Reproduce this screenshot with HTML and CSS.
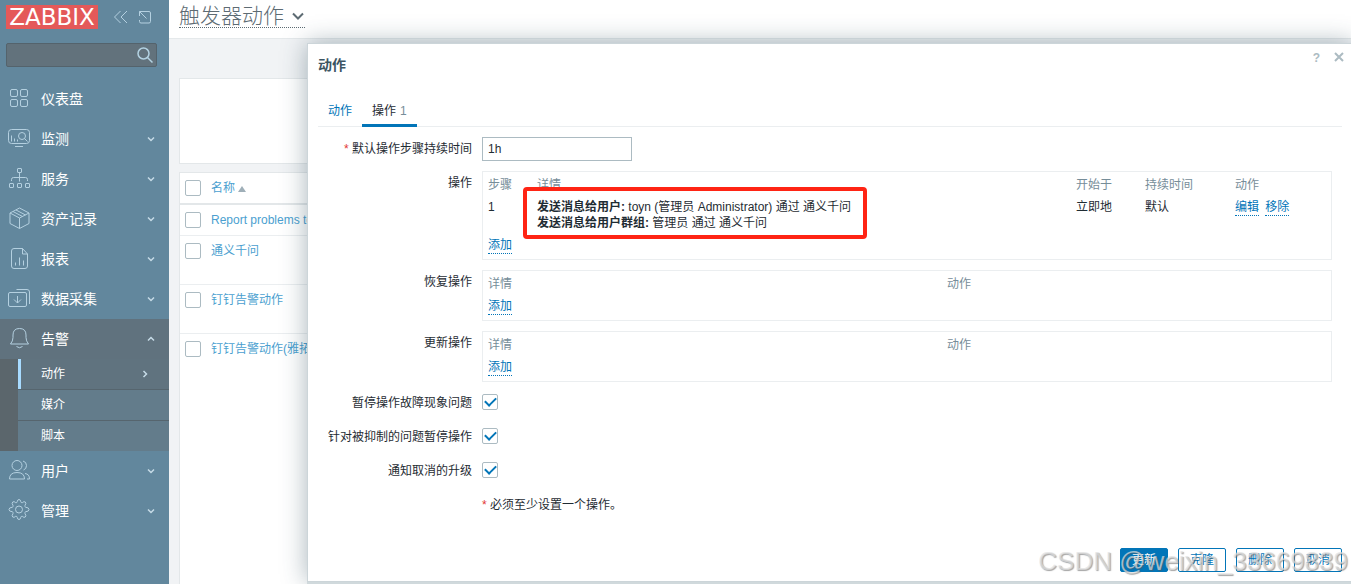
FILE: index.html
```html
<!DOCTYPE html>
<html lang="zh-CN">
<head>
<meta charset="utf-8">
<title>触发器动作</title>
<link rel="stylesheet" href="styles.css">
</head>
<body>
<aside class="sidebar">
  <div class="brand">
    <a class="logo" href="#">ZABBIX</a>
    <button class="icon-btn" aria-label="收起侧边栏"><svg width="16" height="16" viewBox="0 0 16 16"><path d="M7.500 2 1.500 8l6 6M14 2 8 8l6 6"/></svg></button>
    <button class="icon-btn" aria-label="隐藏侧边栏"><svg width="16" height="16" viewBox="0 0 16 16"><path d="M6 2.500h6q1.500 0 1.500 1.500v8.500q0 1.500-1.500 1.500H4q-1.500 0-1.500-1.500V11M9.500 9.500l-7-7M2.500 7V2.500H6"/></svg></button>
  </div>
  <form class="search">
    <input type="text" aria-label="搜索">
    <button type="button" aria-label="搜索"><svg width="18" height="18" viewBox="0 0 18 18"><circle cx="7.500" cy="7.500" r="5.500"/><path d="m11.500 11.500 5 5"/></svg></button>
  </form>
  <nav>
    <a class="item" href="#"><svg class="ico" viewBox="0 0 24 24"><rect x="2.500" y="3.500" width="7" height="7" rx="1.500"/><rect x="12.500" y="3.500" width="7" height="7" rx="1.500"/><rect x="2.500" y="13.500" width="7" height="7" rx="1.500"/><rect x="12.500" y="13.500" width="7" height="7" rx="1.500"/></svg><span>仪表盘</span></a>
    <a class="item" href="#"><svg class="ico" viewBox="0 0 24 24"><rect x=".5" y="3.500" width="21" height="14" rx="3"/><path d="M7 20.500h8M3.500 15.500v-6M6.500 15.500v-3M9.500 15.500v-2M16.500 12.500l3 3"/><circle cx="14" cy="10" r="3.500"/></svg><span>监测</span><svg class="chev" viewBox="0 0 8 8"><path d="m1 2.500 3 3 3-3"/></svg></a>
    <a class="item" href="#"><svg class="ico" viewBox="0 0 24 24"><rect x="9.500" y="2.500" width="4" height="4" rx=".5"/><rect x="1.500" y="17.500" width="4" height="4" rx=".5"/><rect x="9.500" y="17.500" width="4" height="4" rx=".5"/><rect x="17.500" y="17.500" width="4" height="4" rx=".5"/><path d="M11.500 6.500v8M11.500 12.500v3M3.500 15v-1.500q0-2 2-2h12q2 0 2 2V15"/></svg><span>服务</span><svg class="chev" viewBox="0 0 8 8"><path d="m1 2.500 3 3 3-3"/></svg></a>
    <a class="item" href="#"><svg class="ico" viewBox="0 0 24 24"><path d="m11.500 2 9.500 5v10.500l-9.500 5-9.500-5V7zM2 7l9.500 5L21 7M11.500 12v10.500M5 5.500l9.500 5M8 4l9.500 5"/></svg><span>资产记录</span><svg class="chev" viewBox="0 0 8 8"><path d="m1 2.500 3 3 3-3"/></svg></a>
    <a class="item" href="#"><svg class="ico" viewBox="0 0 24 24"><path d="M6 2.500h8.500l5 5.500v12q0 2.500-2.500 2.500H6q-2.500 0-2.500-2.500V5Q3.500 2.500 6 2.500zM14.500 2.500V8h5M7.500 19.500v-3M11.500 19.500v-8M15.500 19.500v-5"/></svg><span>报表</span><svg class="chev" viewBox="0 0 8 8"><path d="m1 2.500 3 3 3-3"/></svg></a>
    <a class="item" href="#"><svg class="ico" viewBox="0 0 24 24"><rect x=".5" y="6.500" width="18" height="14" rx="1.500"/><path d="M8.500 3.500H19q2.500 0 2.500 2.500v12M9.500 10v7M6 13.500 9.500 17l3.500-3.500"/></svg><span>数据采集</span><svg class="chev" viewBox="0 0 8 8"><path d="m1 2.500 3 3 3-3"/></svg></a>
    <div class="group">
      <a class="item open" href="#"><svg class="ico" viewBox="0 0 24 24"><path d="M2.500 18Q5 15 5 11.500V9Q5 2.500 11.500 2.500T18 9v2.500q0 3.500 2.500 6.500zM8.500 20.500q3 2.500 6 0"/></svg><span>告警</span><svg class="chev" viewBox="0 0 8 8"><path d="m1 5.500 3-3 3 3"/></svg></a>
      <div class="submenu">
        <a class="sub active" href="#"><span>动作</span><svg class="chev" viewBox="0 0 8 8"><path d="m2.500 1 3 3-3 3"/></svg></a>
        <a class="sub" href="#">媒介</a>
        <a class="sub" href="#">脚本</a>
      </div>
    </div>
    <a class="item" href="#"><svg class="ico" viewBox="0 0 24 24"><circle cx="9" cy="7.500" r="5"/><path d="M1.500 21q0-6.500 7.500-6.500t7.500 6.500zM15 3q3.500 1 3.500 4.500T15.500 12M17 15.500q4.500.5 4.500 5.500h-2.500"/></svg><span>用户</span><svg class="chev" viewBox="0 0 8 8"><path d="m1 2.500 3 3 3-3"/></svg></a>
    <a class="item" href="#"><svg class="ico" viewBox="0 0 24 24"><circle cx="11" cy="11.500" r="3.500"/><path d="M9.300 3.500Q9.500 1.500 11 1.500t1.700 2q.3 1.500 1.600 1.200 1.700-1.700 3-.7t-.3 3.500q-.7 1.200.8 1.800 3.200.2 3.200 2.200t-3.200 2.200q-1.500.6-.8 1.800 1.600 2.400.3 3.500t-3-.7q-1.300-.3-1.600 1.200-.2 2-1.700 2t-1.700-2Q9 18 7.700 18.300q-1.700 1.700-3 .7T5 15.500q.7-1.200-.8-1.800Q1 13.500 1 11.500t3.200-2.200Q5.700 8.700 5 7.500 3.400 5.100 4.700 4t3 .7Q9 5 9.300 3.500z"/></svg><span>管理</span><svg class="chev" viewBox="0 0 8 8"><path d="m1 2.500 3 3 3-3"/></svg></a>
  </nav>
</aside>

<main class="page">
  <header class="page-head">
    <h1><a class="title" href="#">触发器动作<svg width="12" height="8" viewBox="0 0 12 8"><path d="m1 1.500 5 5 5-5"/></svg></a></h1>
  </header>
  <div class="content">
    <section class="filter"></section>
    <table class="list">
      <thead><tr><th class="tick"><input type="checkbox" aria-label="全选"></th><th><a href="#">名称</a><i class="sort"></i></th></tr></thead>
      <tbody>
        <tr><td class="tick"><input type="checkbox" aria-label="Report problems"></td><td><a href="#">Report problems to Zabbix administrators</a></td></tr>
        <tr class="tall"><td class="tick"><input type="checkbox" aria-label="通义千问"></td><td><a href="#">通义千问</a></td></tr>
        <tr class="tall"><td class="tick"><input type="checkbox" aria-label="钉钉告警动作"></td><td><a href="#">钉钉告警动作</a></td></tr>
        <tr class="tall"><td class="tick"><input type="checkbox" aria-label="钉钉告警动作(雅拓)"></td><td><a href="#">钉钉告警动作(雅拓)</a></td></tr>
      </tbody>
    </table>
  </div>
</main>

<section class="dialog" role="dialog" aria-labelledby="dlg-title">
  <header class="dialog-head">
    <h2 id="dlg-title">动作</h2>
    <button class="help" aria-label="帮助">?</button>
    <button class="close" aria-label="关闭"><svg width="10" height="10" viewBox="0 0 10 10"><path d="m1 1 8 8M9 1 1 9"/></svg></button>
  </header>
  <nav class="tabs"><a href="#">动作</a><a class="current" href="#">操作<span>1</span></a></nav>
  <form class="form">
    <label for="dur" class="req">默认操作步骤持续时间</label>
    <div><input class="text" id="dur" type="text" value="1h"></div>

    <span class="label">操作</span>
    <div class="box ops">
      <table>
        <thead><tr><th class="c-step">步骤</th><th>详情</th><th class="c-start">开始于</th><th class="c-dur">持续时间</th><th class="c-act">动作</th></tr></thead>
        <tbody><tr><td>1</td><td><div class="details"><b>发送消息给用户:</b> toyn (管理员 Administrator) 通过 通义千问<br><b>发送消息给用户群组:</b> 管理员 通过 通义千问</div></td><td>立即地</td><td>默认</td><td><a class="dot" href="#">编辑</a> <a class="dot" href="#">移除</a></td></tr></tbody>
        <tfoot><tr><td colspan="5"><a class="dot" href="#">添加</a></td></tr></tfoot>
      </table>
    </div>

    <span class="label">恢复操作</span>
    <div class="box">
      <table><thead><tr><th class="c-wide">详情</th><th>动作</th></tr></thead><tbody><tr><td colspan="2"><a class="dot" href="#">添加</a></td></tr></tbody></table>
    </div>

    <span class="label">更新操作</span>
    <div class="box">
      <table><thead><tr><th class="c-wide">详情</th><th>动作</th></tr></thead><tbody><tr><td colspan="2"><a class="dot" href="#">添加</a></td></tr></tbody></table>
    </div>

    <label class="tick-label" for="c1">暂停操作故障现象问题</label>
    <div class="check"><input type="checkbox" id="c1" checked></div>
    <label class="tick-label" for="c2">针对被抑制的问题暂停操作</label>
    <div class="check"><input type="checkbox" id="c2" checked></div>
    <label class="tick-label" for="c3">通知取消的升级</label>
    <div class="check"><input type="checkbox" id="c3" checked></div>
    <p class="note req">必须至少设置一个操作。</p>
  </form>
  <footer class="dialog-foot">
    <button class="btn primary">更新</button><button class="btn">克隆</button><button class="btn">删除</button><button class="btn">取消</button>
  </footer>
</section>
<div class="watermark">CSDN @weixin_33669839</div>
</body>
</html>
```
FILE: styles.css
```css
* { box-sizing: border-box; }
html, body { height: 100%; }
body {
  margin: 0;
  display: flex;
  overflow: hidden;
  position: relative;
  background: #f1f3f5;
  color: #1f2c33;
  font: 12px/16px "Liberation Sans", "Noto Sans CJK SC", sans-serif;
}
a { color: #0275b8; text-decoration: none; }
button, input { font: inherit; color: inherit; }
button { padding: 0; border: 0; background: none; cursor: pointer; }
svg { fill: none; stroke: currentColor; display: block; }
table { border-collapse: separate; border-spacing: 0; width: 100%; }
th { font-weight: 400; text-align: left; }

.sidebar { width: 169px; flex: none; background: #62879d; color: #fff; }
.brand { display: flex; align-items: center; padding: 5px 16px 0 6px; gap: 8px; }
.logo {
  width: 92px; height: 24px; margin-right: 7px;
  background: #e45959; color: #fff;
  font: 23px/24px "DejaVu Sans", sans-serif; text-align: center;
}
.icon-btn { color: #b4d0e0; }
.search {
  display: flex; align-items: center;
  height: 24px; margin: 14px 12px 12px 6px; padding-right: 2px;
  background: #62727c; border: 1px solid #54636c; border-radius: 2px;
}
.search input { flex: 1; min-width: 0; border: 0; background: none; outline: 0; }
.search button { color: #b3d2e2; }
.search svg { stroke-width: 1.500; }

.item {
  display: flex; align-items: center;
  height: 40px; padding: 0 14px 0 8px;
  color: #fff; font-size: 14px;
}
.item span { flex: 1; margin-left: 9px; }
.ico { width: 24px; height: 24px; margin-top: -2px; color: #b4d0e0; }
.chev { width: 8px; height: 8px; color: #c6dbe7; stroke-width: 1.500; }
.open { background: #60727e; }
.submenu { border-left: 18px solid #5b666c; }
.sub {
  display: flex; align-items: center; justify-content: space-between;
  height: 31px; padding: 0 20px 0 23px;
  background: #637c8b; color: #fff; border-top: 1px solid #56656e;
}
.sub.active { height: 30px; padding-left: 20px; border-top: 0; border-left: 3px solid #a8dbff; background: #60737f; }

.page { flex: 1; min-width: 0; }
.page-head { height: 39px; padding-left: 10px; background: #fff; border-bottom: 1px solid #e5e9eb; }
h1 { margin: 0; font-size: 21px; font-weight: 300; }
.title {
  display: inline-flex; align-items: center; gap: 8px;
  height: 28px; padding: 5px 1px 0 0; color: #5d6b73;
  border-bottom: 1px dotted #5d6b73;
}
.title svg { stroke-width: 2; }
.content { padding: 39px 10px 0; }
.filter { height: 86px; background: #fff; border: 1px solid #e3e7e9; }
.list {
  margin-top: 8px; background: #fff; border: 1px solid #e3e7e9;
}
.list th { height: 32px; padding: 0; border-bottom: 2px solid #e3e7e9; }
.list td { height: 31px; padding: 7px 0; vertical-align: top; border-bottom: 1px solid #ebeef0; }
.list .tall td { height: 49px; }
.list .tall:last-child td { height: 260px; }
.list a { color: #4b9fd0; }
.list .tick { width: 31px; padding-left: 5px; }
.sort { display: inline-block; margin-left: 3px; border: 4px solid transparent; border-top: 0; border-bottom: 6px solid #9fafb8; }

input[type="checkbox"] {
  appearance: none; display: grid; place-items: center;
  width: 16px; height: 16px; margin: 0;
  background: #fff; border: 1px solid #acbbc2; border-radius: 2px;
}
input[type="checkbox"]:checked::after {
  content: ""; width: 9px; height: 5px; margin-top: -3px;
  border: solid #0275b8; border-width: 0 0 2px 2px; transform: rotate(-45deg);
}

.dialog {
  position: absolute; left: 307px; right: -2px; top: 43px; bottom: 2px;
  display: flex; flex-direction: column;
  padding: 0 10px 9px;
  background: #fff; border: 1px solid #ccd5d9;
  box-shadow: 0 2px 0 #d0d9dc, 0 0 24px rgba(40, 70, 85, .4);
}
.dialog-head { display: flex; align-items: flex-start; color: #acbbc2; }
h2 { flex: 1; margin: 13px 0 0; color: #3c5563; font-size: 14px; line-height: 16px; }
.help { margin: 6px 14px 0 0; font-weight: 700; font-size: 12px; }
.close { margin: 8px -2px 0 0; }
.close svg { stroke-width: 2; }
.tabs { display: flex; margin-top: 24px; border-bottom: 1px solid #ebeef0; }
.tabs a { height: 30px; margin-bottom: -1px; padding: 6px 10px 0; }
.tabs .current { color: #1f2c33; border-bottom: 3px solid #0275b8; }
.tabs span { margin-left: 4px; color: #768d99; }
.form {
  display: grid; grid-template-columns: 154px 1fr;
  column-gap: 10px; row-gap: 10px;
  margin: 10px 10px 0 0;
}
.form > label, .form > .label { text-align: right; padding-top: 4px; }
.form > .tick-label { padding-top: 3px; }
.req::before { content: "* "; color: #e33734; }
.text { display: block; width: 150px; height: 24px; padding: 0 5px; border: 1px solid #acbbc2; outline: 0; }
.box { min-height: 51px; padding: 5px; border: 1px solid #ebeef0; }
.box th { color: #768d99; padding: 0 0 6px; }
.box td { padding: 0; vertical-align: top; }
.c-step { width: 49px; }
.c-start { width: 69px; }
.c-dur { width: 90px; }
.c-act { width: 91px; }
.c-wide { width: 459px; }
.box .dot { margin-right: 3px; }
.dot { display: inline-block; border-bottom: 1px dotted #0275b8; line-height: 15px; }
.ops { height: 89px; }
.ops tfoot td { padding-top: 6px; }
/* highlighted block extends past its cell without moving the row */
.details {
  position: relative; width: max-content;
  margin: -12px -15px -8px -14px; padding: 8px 12px 4px 10px;
  border: 4px solid #ff2414; border-radius: 4px;
}
.check { height: 24px; padding-top: 2px; }
.note { grid-column: 2; margin: 3px 0 0; }
.dialog-foot { display: flex; justify-content: flex-end; gap: 10px; margin-top: auto; }
.btn { width: 48px; height: 24px; border: 1px solid #0275b8; border-radius: 2px; color: #0275b8; background: #fff; }
.primary { background: #0275b8; color: #fff; }
.watermark {
  position: absolute; right: 3px; bottom: 8px;
  color: rgba(225, 225, 225, .7); font-size: 26px; line-height: 30px;
  text-shadow: 1px 1px 1px rgba(90, 90, 90, .55); pointer-events: none;
}
```
